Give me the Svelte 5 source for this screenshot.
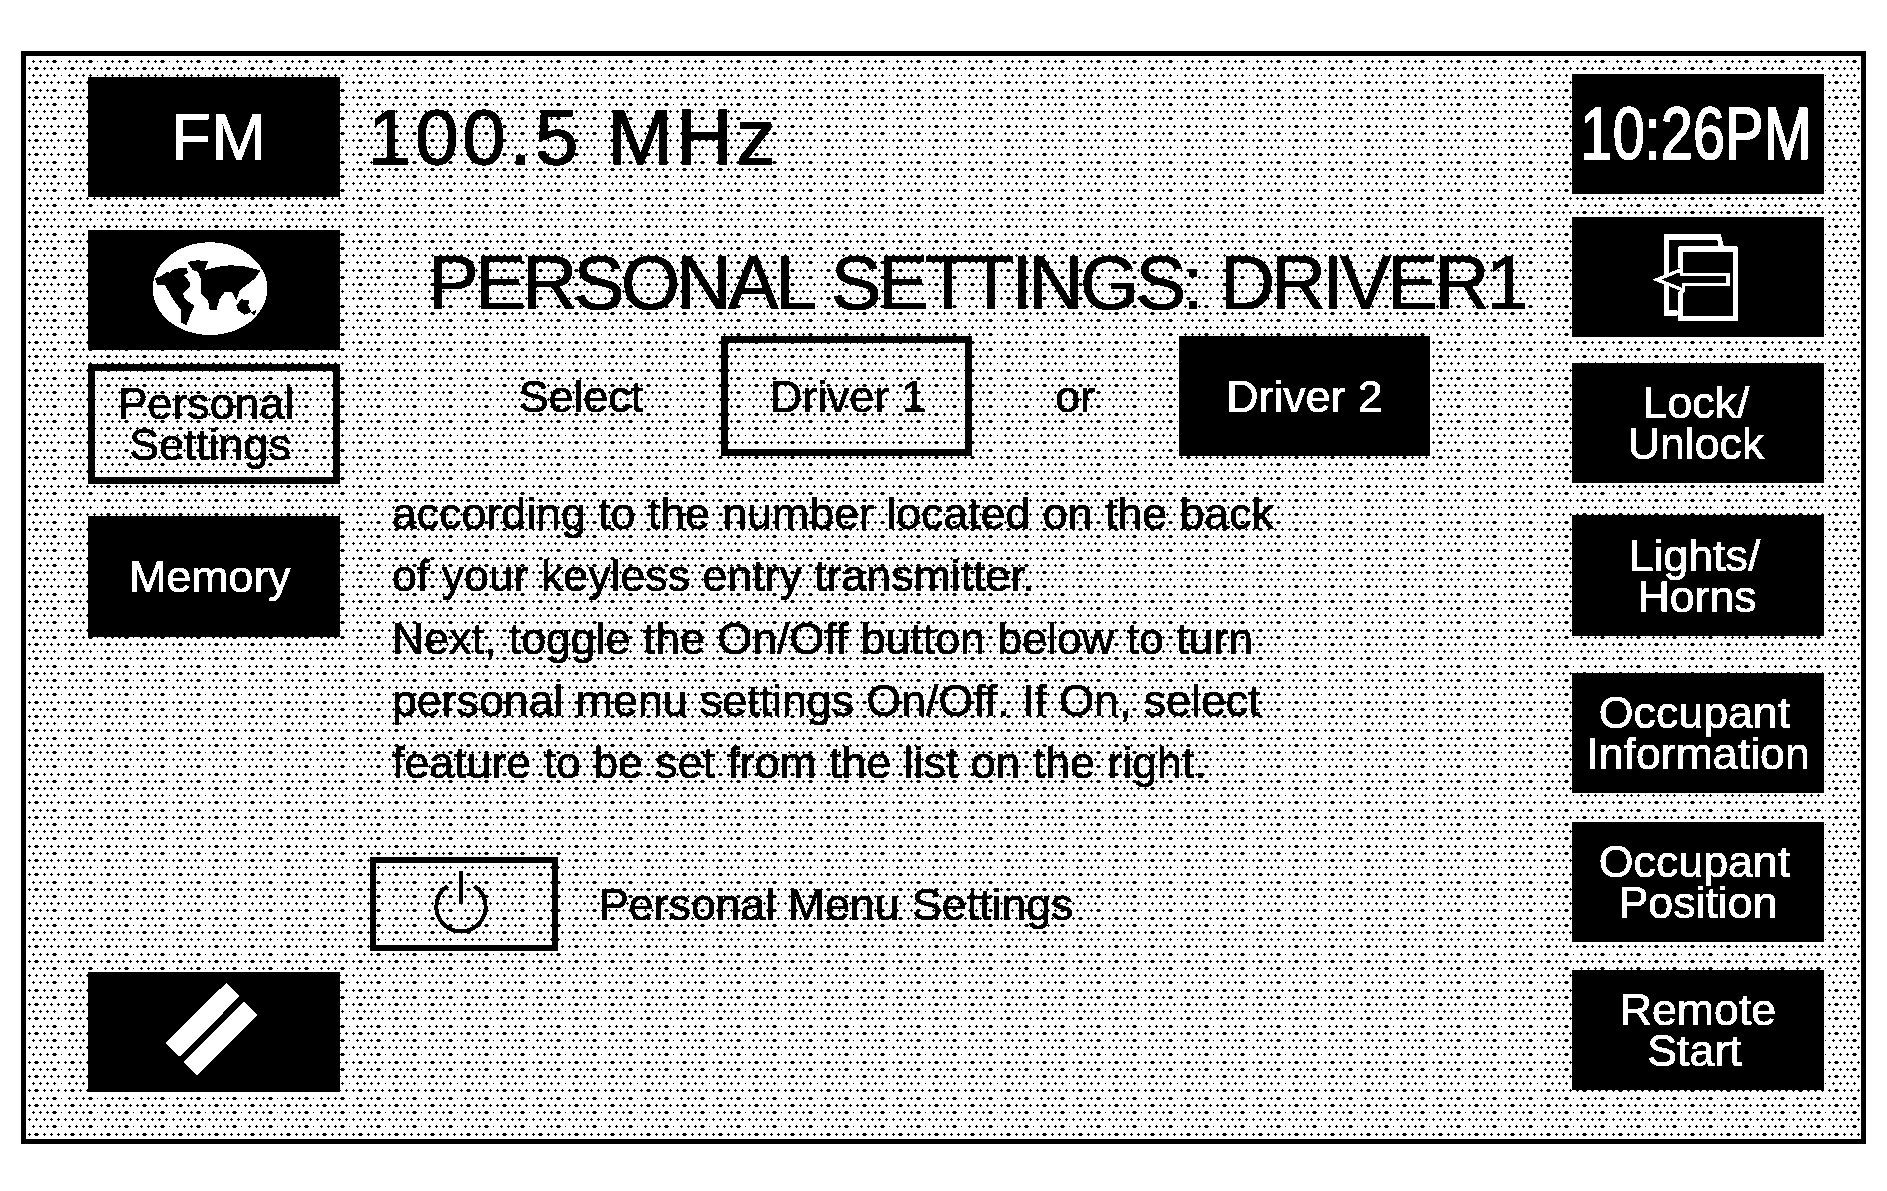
<script lang="ts">
	// halftone tile: 5 rows per 36px, alternating offset, so it repeats every 72px
	const rowY = [5, 12, 19, 26, 34, 41, 48, 55, 62, 70];
	const xsA = [7, 14, 21, 28, 36];
	const xsB = [3, 10, 18, 25, 32];
	const dots = rowY.flatMap((y, i) =>
		(i % 2 ? xsB : xsA).map((x, j) => ({
			x,
			y,
			wide: (i % 2 ? j === 1 : j === 3) && i % 5 !== 2
		}))
	);

	const paragraph = [
		'according to the number located on the back',
		'of your keyless entry transmitter.',
		'Next, toggle the On/Off button below to turn',
		'personal menu settings On/Off. If On, select',
		'feature to be set from the list on the right.'
	];
</script>

<svg class="defs" width="0" height="0" aria-hidden="true">
	<filter id="bilevel" color-interpolation-filters="sRGB" x="0" y="0" width="100%" height="100%">
		<feComponentTransfer>
			<feFuncR type="discrete" tableValues="0 1" />
			<feFuncG type="discrete" tableValues="0 1" />
			<feFuncB type="discrete" tableValues="0 1" />
		</feComponentTransfer>
	</filter>
</svg>

<div class="screen">
	<svg class="halftone" width="100%" height="100%" aria-hidden="true">
		<defs>
			<pattern id="dots" width="36" height="72" patternUnits="userSpaceOnUse">
				{#each dots as d}
					<rect x={d.x - (d.wide ? 2 : 1)} y={d.y} width={d.wide ? 5 : 3} height="1" />
					<rect x={d.x - (d.wide ? 1 : 0)} y={d.y - 1} width={d.wide ? 3 : 1} height="3" />
				{/each}
			</pattern>
		</defs>
		<rect width="100%" height="100%" fill="url(#dots)" />
	</svg>

	<div class="col left">
		<div class="btn fm">FM</div>
		<div class="btn globe">
			<svg width="121.33" height="100" viewBox="250 89 364 300">
				<ellipse cx="421" cy="235" rx="172" ry="139" fill="#fff" />
				<path d="M256 203L275 198 290 185 300 187 315 175 350 173 355 187 343 195 360 215 360 230 340 250 345 265 375 287 365 305 360 320 350 345 335 337 335 300 320 280 300 250 287 225 263 225Z" />
				<path d="M353 155L385 150 415 153 405 180 440 170 480 165 520 167 573 180 555 205 530 225 510 240 500 270 487 245 465 245 450 265 440 300 420 300 415 270 393 250 395 210 385 185 370 180Z" />
				<path d="M500 285L515 267 540 270 535 285 545 305 525 313 505 300Z" />
				<path d="M543 307L560 299 555 315Z" />
			</svg>
		</div>
		<div class="btn outline personal"><span>Personal</span><span>Settings</span></div>
		<div class="btn memory">Memory</div>
		<div class="btn slashes">
			<svg width="101.33" height="101.33" viewBox="280 64 304 304">
				<path d="M470 69L510 110 329 291 288 250Z" fill="#fff" />
				<path d="M523 126L564 166 382 347 342 306Z" fill="#fff" />
			</svg>
		</div>
	</div>

	<div class="middle">
		<div class="freq">100.5 MHz</div>
		<div class="title">PERSONAL SETTINGS: DRIVER1</div>
		<div class="driver-row">
			<span class="select">Select</span>
			<div class="btn outline driver first">Driver 1</div>
			<span class="or">or</span>
			<div class="btn driver">Driver 2</div>
		</div>
		<div class="para">
			{#each paragraph as line}
				<div>{line}</div>
			{/each}
		</div>
		<div class="power-row">
			<div class="power">
				<svg width="66.67" height="66.67" viewBox="242 92 200 200" fill="none" stroke="#000" stroke-width="12">
					<path d="M292 137A74 74 0 1 0 372 137" />
					<path d="M332 93V190" stroke-width="13" />
				</svg>
			</div>
			<span class="power-label">Personal Menu Settings</span>
		</div>
	</div>

	<div class="col right">
		<div class="btn clock"><span>10:26PM</span></div>
		<div class="btn">
			<svg width="93.33" height="93.33" viewBox="274 511 280 280" fill="none" stroke="#fff" stroke-width="15">
				<path d="M355 760H320V532H478L486 565" />
				<path d="M364 625V568H527V777H364V695" />
				<path d="M292 660L365 630 365 645 505 645 505 675 372 675 372 692Z" fill="#000" stroke-width="10" />
			</svg>
		</div>
		<div class="btn pad"><span>Lock/</span><span>Unlock</span></div>
		<div class="btn"><span class="nudge">Lights/</span><span class="nudge-s">Horns</span></div>
		<div class="btn"><span class="nudge">Occupant</span><span>Information</span></div>
		<div class="btn"><span class="nudge">Occupant</span><span>Position</span></div>
		<div class="btn"><span>Remote</span><span class="nudge">Start</span></div>
	</div>
</div>

<style>
	:global(body) {
		margin: 0;
		background: #fff;
	}

	.defs {
		position: absolute;
	}

	.screen {
		position: relative;
		box-sizing: border-box;
		width: 1845px;
		height: 1093px;
		margin: 51px 0 0 21px;
		padding: 18px 37px 0 62px;
		border: 5px solid #000;
		background: #fff;
		display: grid;
		grid-template-columns: 252px 1fr 252px;
		font-family: 'Liberation Sans', Arial, sans-serif;
		font-size: 44.7px;
		line-height: 41px;
		color: #000;
		-webkit-text-stroke: 0.7px currentColor;
		filter: url(#bilevel);
	}

	.halftone {
		position: absolute;
		inset: 0;
		shape-rendering: crispEdges;
	}

	.col,
	.middle {
		position: relative;
		display: flex;
		flex-direction: column;
		min-width: 0;
	}

	.btn {
		box-sizing: border-box;
		height: 120px;
		flex: none;
		background: #000;
		color: #fff;
		display: flex;
		flex-direction: column;
		align-items: center;
		justify-content: center;
		text-align: center;
	}

	.btn.pad {
		padding-right: 4px;
	}

	.nudge {
		padding-right: 7px;
	}

	.nudge-s {
		padding-right: 2px;
	}

	.btn svg {
		display: block;
		fill: #000;
	}

	.outline {
		background: none;
		color: #000;
		border: 7px solid #000;
	}

	.left .fm {
		margin-top: 3px;
		font-size: 66px;
		padding-left: 9px;
	}
	.left .globe {
		margin-top: 33px;
	}
	.left .personal {
		margin-top: 14px;
		padding-right: 8px;
	}
	.left .personal span:first-child {
		padding-right: 8px;
	}
	.left .memory {
		margin-top: 32px;
		padding-right: 8px;
		height: 121px;
	}
	.left .slashes {
		margin-top: auto;
		margin-bottom: 47px;
	}

	.right .btn:nth-child(2) {
		margin-top: 23px;
	}
	.right .btn:nth-child(3) {
		margin-top: 26px;
	}
	.right .btn:nth-child(4) {
		margin-top: 32px;
		height: 121px;
	}
	.right .btn:nth-child(5) {
		margin-top: 37px;
	}
	.right .btn:nth-child(6) {
		margin-top: 29px;
	}
	.right .btn:nth-child(7) {
		margin-top: 28px;
	}

	.clock {
		font-size: 75px;
		-webkit-text-stroke: 1.6px #fff;
	}
	.clock span {
		display: inline-block;
		transform: scaleX(0.77);
		white-space: nowrap;
		margin-top: -2px;
		margin-right: 3px;
	}

	.freq {
		margin: 23px 0 0 28px;
		font-size: 78px;
		line-height: 80px;
		letter-spacing: 3.8px;
		-webkit-text-stroke: 1.4px #000;
	}

	.title {
		margin: 61px 0 0 88px;
		font-size: 76px;
		line-height: 90px;
		letter-spacing: -3.5px;
		word-spacing: 2px;
		white-space: nowrap;
		-webkit-text-stroke: 1px #000;
	}

	.driver-row {
		margin-top: 8px;
		display: flex;
		align-items: center;
	}
	.select {
		margin-left: 179px;
		margin-right: 78px;
	}
	.driver {
		width: 251px;
	}
	.driver.first {
		padding-left: 3px;
	}
	.or {
		margin: 0 84px 0 83px;
	}

	.para {
		margin: 27px 0 0 52px;
		line-height: 62.3px;
		white-space: nowrap;
	}

	.power-row {
		margin: 63px 0 0 30px;
		display: flex;
		align-items: center;
		gap: 41px;
	}
	.power {
		box-sizing: border-box;
		width: 188px;
		height: 94px;
		border: 6px solid #000;
		display: flex;
		align-items: center;
		justify-content: center;
	}
</style>
